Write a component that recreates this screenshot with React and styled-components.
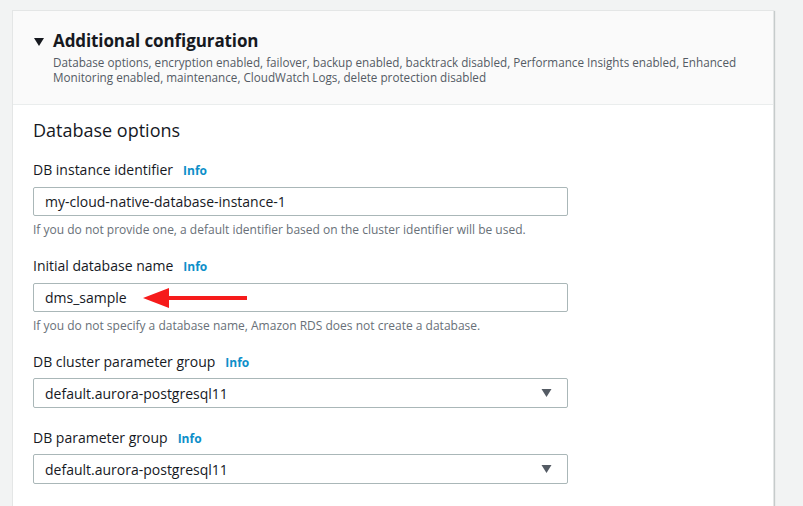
import React from 'react'
import styled, { createGlobalStyle } from 'styled-components'

const GlobalStyle = createGlobalStyle`
  html, body {
    margin: 0;
    padding: 0;
    background: #f2f3f3;
    font-family: "Open Sans", "Noto Sans", sans-serif;
    color: #16191f;
  }
`

const fields = [
  {
    label: 'DB instance identifier',
    value: 'my-cloud-native-database-instance-1',
    help: 'If you do not provide one, a default identifier based on the cluster identifier will be used.',
  },
  {
    label: 'Initial database name',
    value: 'dms_sample',
    help: 'If you do not specify a database name, Amazon RDS does not create a database.',
    arrow: true,
  },
  {
    label: 'DB cluster parameter group',
    value: 'default.aurora-postgresql11',
    select: true,
  },
  {
    label: 'DB parameter group',
    value: 'default.aurora-postgresql11',
    select: true,
  },
]

const App = () => {
  return (
    <Page>
      <GlobalStyle />
      <Card>
        <Header>
          <TitleRow>
            <Caret viewBox="0 0 10 8">
              <path d="M0 0 L10 0 L5 8 Z" fill="#16191f" />
            </Caret>
            <Title>Additional configuration</Title>
          </TitleRow>
          <Description>
            Database options, encryption enabled, failover, backup enabled, backtrack disabled, Performance Insights enabled, Enhanced
            <br />
            Monitoring enabled, maintenance, CloudWatch Logs, delete protection disabled
          </Description>
        </Header>
        <Body>
          <SectionTitle>Database options</SectionTitle>
          <Fields>
            {fields.map((f) => (
              <Field key={f.label} $select={f.select}>
                <Label>
                  {f.label}
                  <Info>Info</Info>
                </Label>
                <InputBox $select={f.select}>
                  <span>{f.value}</span>
                  {f.select && (
                    <SelectCaret viewBox="0 0 10 8">
                      <path d="M0 0 L10 0 L5 8 Z" fill="#545b64" />
                    </SelectCaret>
                  )}
                  {f.arrow && (
                    <Arrow viewBox="0 0 104 24">
                      <path d="M0 12 L26 2 L26 10 L104 10 L104 14 L26 14 L26 22 Z" fill="#f61b1b" />
                    </Arrow>
                  )}
                </InputBox>
                {f.help && <Help>{f.help}</Help>}
              </Field>
            ))}
          </Fields>
        </Body>
      </Card>
    </Page>
  )
}

export default App

const Page = styled.div`
  padding: 10px 29px 0 12px;
  min-height: 506px;
  box-sizing: border-box;
`

const Card = styled.div`
  background: #ffffff;
  border: 1px solid #e4e6e6;
  box-shadow: 1px 1px 1px rgba(0, 22, 22, 0.18);
  min-height: 500px;
`

const Header = styled.div`
  background: #fafafa;
  border-bottom: 1px solid #eaeded;
  padding: 18px 20px 19px 21px;
`

const TitleRow = styled.div`
  display: flex;
  align-items: center;
  gap: 9px;
`

const Caret = styled.svg`
  width: 10px;
  height: 8px;
  margin-top: 1px;
`

const Title = styled.div`
  font-size: 17px;
  font-weight: 700;
  line-height: 24px;
  letter-spacing: -0.1px;
`

const Description = styled.div`
  font-size: 11.7px;
  line-height: 15px;
  color: #545b64;
  padding-left: 19px;
  margin-top: 2px;
  white-space: nowrap;
`

const Body = styled.div`
  padding: 13px 20px 20px 20px;
`

const SectionTitle = styled.div`
  font-size: 18px;
  line-height: 24px;
  font-weight: 400;
`

const Fields = styled.div`
  display: flex;
  flex-direction: column;
  gap: 18px;
  margin-top: 18px;
`

const Field = styled.div`
  display: flex;
  flex-direction: column;
  margin-bottom: ${(p) => (p.$select ? '2px' : '0')};
`

const Label = styled.div`
  height: 20px;
  font-size: 14px;
  line-height: 20px;
  display: flex;
  align-items: baseline;
  gap: 10px;
`

const Info = styled.span`
  font-size: 12px;
  line-height: 20px;
  font-weight: 700;
  color: #0d8fc9;
`

const InputBox = styled.div`
  position: relative;
  margin-top: ${(p) => (p.$select ? '6px' : '7px')};
  width: 535px;
  height: ${(p) => (p.$select ? '30px' : '29px')};
  box-sizing: border-box;
  border: 1px solid #aab7b8;
  border-radius: 2px;
  padding: 0 15px 0 11px;
  display: flex;
  align-items: center;
  justify-content: space-between;
  font-size: 14px;
`

const SelectCaret = styled.svg`
  width: 11px;
  height: 8px;
`

const Arrow = styled.svg`
  position: absolute;
  left: 109px;
  top: 2px;
  width: 104px;
  height: 24px;
`

const Help = styled.div`
  margin-top: 6px;
  font-size: 12px;
  line-height: 16px;
  color: #687078;
`
